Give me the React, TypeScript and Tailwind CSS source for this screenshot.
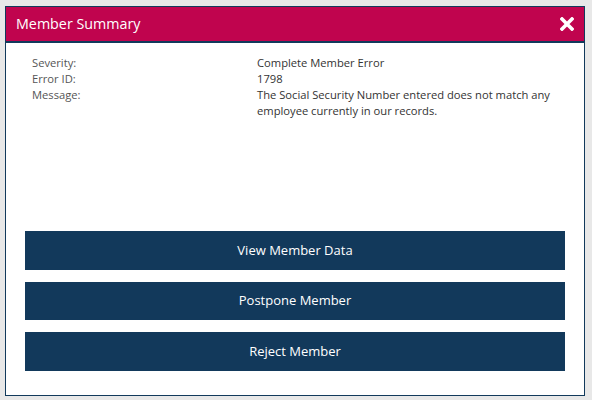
import React from "react";

export default function App() {
  const font = { fontFamily: '"Open Sans", "Noto Sans", sans-serif' };
  return (
    <div className="w-[592px] h-[400px] bg-[#e8e8e8] pt-[6px] pl-[5px]" style={font}>
      <div className="w-[580px] h-[390px] border border-[#123a5c] bg-white flex flex-col">
        <div className="h-[36px] bg-[#c0044e] border-b-2 border-[#123a5c] flex items-center justify-between pl-[10px] pr-[10px]">
          <span className="text-white text-[14.3px] leading-none">Member Summary</span>
          <svg width="14" height="14" viewBox="0 0 14 14">
            <path d="M2 2 L12 12 M12 2 L2 12" stroke="white" strokeWidth="3.6" strokeLinecap="square" />
          </svg>
        </div>
        <div className="flex-1 flex flex-col">
          <div className="pt-[12px] pl-[26px] pr-[10px] text-[11.2px] leading-[16px]">
            <div className="grid grid-cols-[225px_1fr]">
              <span className="text-[#555]">Severity:</span>
              <span className="text-[#333]">Complete Member Error</span>
              <span className="text-[#555]">Error ID:</span>
              <span className="text-[#333]">1798</span>
              <span className="text-[#555]">Message:</span>
              <span className="text-[#333]">The Social Security Number entered does not match any employee currently in our records.</span>
            </div>
          </div>
          <div className="mt-auto flex flex-col px-[19px] pb-[24px]">
            <button className="h-[39px] w-full bg-[#12395b] text-white text-[13px] flex items-center justify-center">View Member Data</button>
            <button className="mt-[12px] h-[38px] w-full bg-[#12395b] text-white text-[13px] flex items-center justify-center">Postpone Member</button>
            <button className="mt-[12px] h-[39px] w-full bg-[#12395b] text-white text-[13px] flex items-center justify-center">Reject Member</button>
          </div>
        </div>
      </div>
    </div>
  );
}
